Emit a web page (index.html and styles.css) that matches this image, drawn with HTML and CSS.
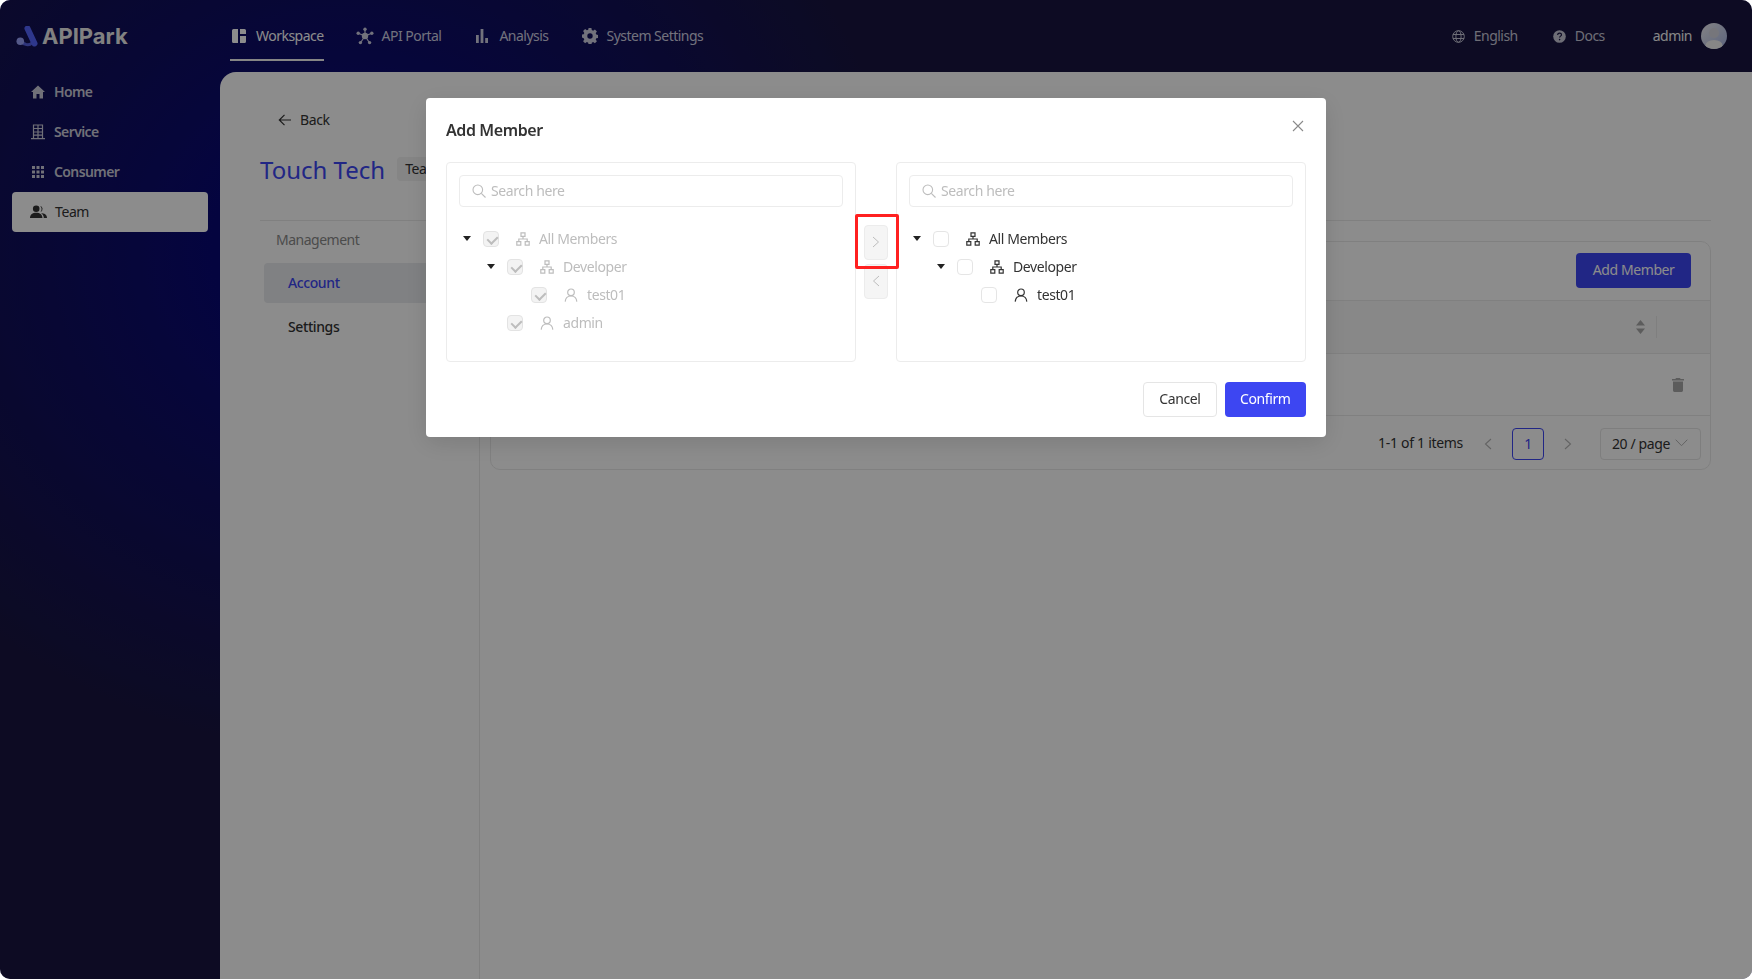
FILE: index.html
```html
<!doctype html>
<html lang="en">
<head>
  <meta charset="utf-8">
  <title>Team | APIPark</title>
  <link rel="stylesheet" href="styles.css">
</head>
<body>
  <svg class="icon-defs" width="0" height="0">
    <symbol id="i-org" viewBox="0 0 14 14">
      <path d="M5 .8h4v3.6H5zM.8 9.6h4v3.6h-4zM9.2 9.6h4v3.6h-4zM7 4.400v2.600M2.800 9.600V7h8.400v2.600" fill="none" stroke="currentColor" stroke-width="1.200"/>
    </symbol>
    <symbol id="i-user" viewBox="0 0 14 14">
      <circle cx="7" cy="4.300" r="3.300" fill="none" stroke="currentColor" stroke-width="1.200"/>
      <path d="M1.200 13.600c.3-3.400 2.600-5.600 5.800-5.600s5.500 2.200 5.800 5.600" fill="none" stroke="currentColor" stroke-width="1.200"/>
    </symbol>
    <symbol id="i-search" viewBox="0 0 14 14">
      <circle cx="5.800" cy="5.800" r="4.800" fill="none" stroke="currentColor" stroke-width="1.100"/>
      <path d="M9.300 9.300l4.200 4.200" fill="none" stroke="currentColor" stroke-width="1.100"/>
    </symbol>
  </svg>

  <div class="app">
    <header class="topbar">
      <div class="logo">
        <svg class="logo-mark" width="23" height="21" viewBox="0 0 23 21">
          <path d="M5 15c3 4 8 5 11 2" fill="none" stroke="#5560e0" stroke-width="3"/>
          <path d="M11.500 2.500L18.500 17.500" fill="none" stroke="#5565ff" stroke-width="6" stroke-linecap="round"/>
          <circle cx="4.300" cy="15.300" r="3.800" fill="#9aa3fa"/>
        </svg>
        <span class="logo-text">APIPark</span>
      </div>
      <nav class="nav">
        <a class="nav-item active">
          <span class="nav-icon">
            <svg width="14" height="14" viewBox="0 0 14 14"><path d="M0 1.500A1.500 1.500 0 0 1 1.500 0H6v14H1.500A1.500 1.500 0 0 1 0 12.500zM8 0h4.500A1.500 1.500 0 0 1 14 1.500V5H8zM8 7h6v5.500a1.500 1.500 0 0 1-1.500 1.500H8z" fill="currentColor"/></svg>
          </span>
          <span class="label">Workspace</span>
        </a>
        <a class="nav-item">
          <span class="nav-icon">
            <svg width="18" height="18" viewBox="0 0 18 18"><g fill="currentColor"><circle cx="9" cy="9" r="3.200"/><circle cx="9" cy="2.200" r="1.700"/><circle cx="2.200" cy="6.200" r="1.700"/><circle cx="15.800" cy="6.200" r="1.700"/><circle cx="4.400" cy="15.600" r="1.700"/><circle cx="13.600" cy="15.600" r="1.700"/></g><path d="M9 3v6M3 6.500L9 9l6-2.500M5 15l4-6 4 6" fill="none" stroke="currentColor" stroke-width="1.200"/></svg>
          </span>
          <span class="label">API Portal</span>
        </a>
        <a class="nav-item">
          <span class="nav-icon">
            <svg width="12" height="14" viewBox="0 0 12 14"><path d="M0 6h2.800v8H0zM4.600 0h2.800v14H4.600zM9.200 9H12v5H9.200z" fill="currentColor"/></svg>
          </span>
          <span class="label">Analysis</span>
        </a>
        <a class="nav-item">
          <span class="nav-icon">
            <svg width="16" height="16" viewBox="0 0 16 16"><path fill-rule="evenodd" d="M6.600 0h2.800l.4 2.100 1.300.6 1.800-1.200 2 2-1.200 1.800.6 1.300 2.100.4v2.800l-2.100.4-.6 1.300 1.200 1.800-2 2-1.800-1.200-1.300.6-.4 2.100H6.600l-.4-2.100-1.300-.6-1.800 1.200-2-2 1.200-1.800-.6-1.300L-.4 9.400V6.600l2.100-.4.600-1.300-1.200-1.800 2-2 1.800 1.200 1.300-.6zM8 5.300a2.700 2.700 0 1 0 0 5.400 2.700 2.700 0 0 0 0-5.400z" fill="currentColor"/></svg>
          </span>
          <span class="label">System Settings</span>
        </a>
      </nav>
      <div class="top-right">
        <a class="top-link">
          <svg width="13" height="13" viewBox="0 0 13 13"><g fill="none" stroke="currentColor" stroke-width="1"><circle cx="6.500" cy="6.500" r="5.800"/><ellipse cx="6.500" cy="6.500" rx="2.600" ry="5.800"/><path d="M1 4.500h11M1 8.500h11"/></g></svg>
          <span class="label">English</span>
        </a>
        <a class="top-link">
          <svg width="13" height="13" viewBox="0 0 13 13"><circle cx="6.500" cy="6.500" r="6.300" fill="currentColor"/><path d="M4.600 5c.1-1.200.9-1.800 2-1.800s1.900.7 1.900 1.600c0 1.300-1.900 1.400-1.900 2.800" fill="none" stroke="#181541" stroke-width="1.200"/><circle cx="6.600" cy="9.600" r=".8" fill="#181541"/></svg>
          <span class="label">Docs</span>
        </a>
        <span class="user-name label">admin</span>
        <svg class="avatar" width="26" height="26" viewBox="0 0 26 26">
          <defs>
            <linearGradient id="avatar-grad" x1="0" y1="0" x2="1" y2="1">
              <stop offset="0" stop-color="#f0eef0"/>
              <stop offset="1" stop-color="#a9b8e8"/>
            </linearGradient>
            <clipPath id="avatar-clip"><circle cx="13" cy="13" r="13"/></clipPath>
          </defs>
          <circle cx="13" cy="13" r="13" fill="url(#avatar-grad)"/>
          <g clip-path="url(#avatar-clip)">
            <circle cx="13" cy="10" r="5" fill="#d8d8e0"/>
            <ellipse cx="13" cy="22.500" rx="8.500" ry="5.500" fill="#f4f4f4"/>
          </g>
        </svg>
      </div>
    </header>

    <aside class="sidebar">
      <a class="side-item">
        <svg width="16" height="16" viewBox="0 0 16 16"><path d="M8 1.500L1 8h2v6.500h3.500V10h3v4.500H13V8h2z" fill="currentColor"/></svg>
        <span class="label">Home</span>
      </a>
      <a class="side-item">
        <svg width="16" height="16" viewBox="0 0 16 16"><path d="M3.500 1h9v13.500h-9zM3.500 4.500h9M3.500 8h9M3.500 11.200h9M8 1v13.500M1 14.700h14" fill="none" stroke="currentColor" stroke-width="1.200"/></svg>
        <span class="label">Service</span>
      </a>
      <a class="side-item">
        <svg width="16" height="16" viewBox="0 0 16 16"><path d="M2 2h3v3H2zM6.500 2h3v3h-3zM11 2h3v3h-3zM2 6.500h3v3H2zM6.500 6.500h3v3h-3zM11 6.500h3v3h-3zM2 11h3v3H2zM6.500 11h3v3h-3zM11 11h3v3h-3z" fill="currentColor"/></svg>
        <span class="label">Consumer</span>
      </a>
      <a class="side-item active">
        <svg width="17" height="16" viewBox="0 0 17 16"><g fill="currentColor"><circle cx="6.200" cy="4.800" r="3.300"/><path d="M0 14c0-3.500 2.600-5.200 6.200-5.200s6.200 1.700 6.200 5.200z"/><path d="M9.800 1.700a3.200 3.200 0 0 1 .6 6.200 4 4 0 0 0-.6-6.200zM11 9c3.300.2 6 1.600 6 5h-3.200c0-2-1-3.800-2.800-5z"/></g></svg>
        <span class="label">Team</span>
      </a>
    </aside>

    <main class="main">
      <a class="back">
        <svg width="14" height="14" viewBox="0 0 14 14"><path d="M13 7H1.500M6.500 1.800L1.300 7l5.200 5.200" fill="none" stroke="currentColor" stroke-width="1.200"/></svg>
        <span class="label">Back</span>
      </a>
      <div class="team-head">
        <h1 class="team-name">Touch Tech</h1>
        <span class="team-tag">Team ID: touch-tech</span>
      </div>
      <div class="team-body">
        <div class="sub-nav">
          <div class="sub-title">Management</div>
          <a class="sub-item active">Account</a>
          <a class="sub-item">Settings</a>
        </div>
        <div class="content">
          <section class="card">
            <div class="card-tools">
              <button class="btn btn-primary">Add Member</button>
            </div>
            <div class="table-head">
              <svg class="sort" width="9" height="14" viewBox="0 0 9 14"><path d="M4.500 0L9 5.500H0zM4.500 14L0 8.500h9z" fill="currentColor"/></svg>
              <span class="col-line"></span>
            </div>
            <div class="table-row">
              <svg class="trash" width="12" height="14" viewBox="0 0 12 14"><path d="M4 0h4l.6 1H12v1.600H0V1h3.400zM1 3.600h10V12.600A1.400 1.400 0 0 1 9.600 14H2.400A1.400 1.400 0 0 1 1 12.600z" fill="currentColor"/></svg>
            </div>
            <div class="pager">
              <span class="pager-total">1-1 of 1 items</span>
              <svg class="pager-arrow" width="8" height="12" viewBox="0 0 8 12"><path d="M7 1L1.500 6 7 11" fill="none" stroke="currentColor" stroke-width="1.100"/></svg>
              <span class="pager-num">1</span>
              <svg class="pager-arrow" width="8" height="12" viewBox="0 0 8 12"><path d="M1 1l5.500 5L1 11" fill="none" stroke="currentColor" stroke-width="1.100"/></svg>
              <span class="pager-size">20 / page
                <svg width="13" height="8" viewBox="0 0 13 8"><path d="M.7.700l5.800 6 5.800-6" fill="none" stroke="currentColor" stroke-width="1"/></svg>
              </span>
            </div>
          </section>
        </div>
      </div>
    </main>
  </div>

  <div class="mask">
    <div class="modal">
      <div class="modal-head">
        <h2 class="modal-title">Add Member</h2>
        <svg class="modal-close" width="12" height="12" viewBox="0 0 12 12"><path d="M1 1l10 10M11 1L1 11" fill="none" stroke="currentColor" stroke-width="1.100"/></svg>
      </div>
      <div class="transfer">
        <div class="transfer-panel">
          <div class="search">
            <svg width="14" height="14"><use href="#i-search"/></svg>
            <span class="label">Search here</span>
          </div>
          <ul class="tree disabled">
            <li class="tree-row">
              <span class="caret"></span><span class="check on"></span>
              <svg class="tree-icon" width="14" height="14"><use href="#i-org"/></svg><span class="label">All Members</span>
            </li>
            <li class="tree-row level-1">
              <span class="caret"></span><span class="check on"></span>
              <svg class="tree-icon" width="14" height="14"><use href="#i-org"/></svg><span class="label">Developer</span>
            </li>
            <li class="tree-row level-2">
              <span class="caret none"></span><span class="check on"></span>
              <svg class="tree-icon" width="14" height="14"><use href="#i-user"/></svg><span class="label">test01</span>
            </li>
            <li class="tree-row level-1">
              <span class="caret none"></span><span class="check on"></span>
              <svg class="tree-icon" width="14" height="14"><use href="#i-user"/></svg><span class="label">admin</span>
            </li>
          </ul>
        </div>
        <div class="transfer-ops">
          <span class="op-btn">
            <svg width="8" height="12" viewBox="0 0 8 12"><path d="M1 1l5.500 5L1 11" fill="none" stroke="currentColor" stroke-width="1"/></svg>
          </span>
          <span class="op-btn">
            <svg width="8" height="12" viewBox="0 0 8 12"><path d="M7 1L1.500 6 7 11" fill="none" stroke="currentColor" stroke-width="1"/></svg>
          </span>
          <span class="red-mark"></span>
        </div>
        <div class="transfer-panel">
          <div class="search">
            <svg width="14" height="14"><use href="#i-search"/></svg>
            <span class="label">Search here</span>
          </div>
          <ul class="tree">
            <li class="tree-row">
              <span class="caret"></span><span class="check"></span>
              <svg class="tree-icon" width="14" height="14"><use href="#i-org"/></svg><span class="label">All Members</span>
            </li>
            <li class="tree-row level-1">
              <span class="caret"></span><span class="check"></span>
              <svg class="tree-icon" width="14" height="14"><use href="#i-org"/></svg><span class="label">Developer</span>
            </li>
            <li class="tree-row level-2">
              <span class="caret none"></span><span class="check"></span>
              <svg class="tree-icon" width="14" height="14"><use href="#i-user"/></svg><span class="label">test01</span>
            </li>
          </ul>
        </div>
      </div>
      <div class="modal-foot">
        <button class="btn btn-default">Cancel</button>
        <button class="btn btn-primary">Confirm</button>
      </div>
    </div>
  </div>
</body>
</html>
```

FILE: styles.css
```css
* {
  box-sizing: border-box;
}
html, body {
  height: 100%;
}
body {
  margin: 0;
  background: #fff;
  color: #333;
  font-family: 'Noto Sans', 'Open Sans', sans-serif;
  font-size: 14px;
  letter-spacing: -0.4px;
  overflow: hidden;
}
a {
  color: inherit;
}
.icon-defs {
  display: none;
}
/* text sits a pixel higher than the icons beside it */
.label {
  margin-bottom: 2px;
}

/* page frame */
.app {
  display: grid;
  grid-template-columns: 220px 1fr;
  grid-template-rows: 72px 1fr;
  height: 100vh;
  border-radius: 10px;
  overflow: hidden;
  background: radial-gradient(ellipse 550px 500px at 350px 250px, #090974 0%, #090974 25%, #181541 100%);
}

/* top bar */
.topbar {
  grid-column: 1 / 3;
  display: flex;
  align-items: center;
  padding-right: 25px;
  letter-spacing: -0.52px;
}
.logo {
  width: 230px;
  display: flex;
  align-items: center;
  gap: 3px;
  padding-left: 16px;
}
.logo-text {
  color: #ececec;
  font-family: 'Inter', sans-serif;
  font-size: 22px;
  font-weight: 700;
  letter-spacing: 0;
}
.nav {
  display: flex;
  gap: 32px;
  height: 100%;
}
.nav-item {
  display: flex;
  align-items: center;
  gap: 8px;
  height: 100%;
  color: #cfcfe2;
  border-bottom: 2px solid transparent;
  padding-top: 2px;
}
.nav-item.active {
  color: #fff;
  height: 61px;
  padding-top: 13px;
  border-bottom-color: #f2f2f2;
}
.nav-icon {
  width: 18px;
  display: flex;
  justify-content: center;
}
.top-right {
  margin-left: auto;
  display: flex;
  align-items: center;
  color: #c8c8d8;
}
.top-link {
  display: flex;
  align-items: center;
  gap: 9px;
  margin-right: 35px;
}
.top-link + .top-link {
  margin-right: 48px;
}
.user-name {
  color: #f5f5f5;
  margin-right: 9px;
}
.avatar {
  display: block;
}

/* side menu */
.sidebar {
  padding: 0 12px;
}
.side-item {
  display: flex;
  align-items: center;
  gap: 8px;
  height: 40px;
  padding-left: 18px;
  color: #cdcdda;
  font-weight: 600;
  letter-spacing: -0.6px;
  border-radius: 4px;
}
.side-item.active {
  background: #fff;
  color: #333;
  font-weight: 400;
  letter-spacing: -0.4px;
}

/* main area */
.main {
  background: #fff;
  border-top-left-radius: 16px;
  padding: 36px 41px 0 40px;
  display: flex;
  flex-direction: column;
  min-height: 0;
}
.back {
  display: flex;
  align-items: center;
  gap: 8px;
  height: 24px;
  padding-left: 18px;
}
.team-head {
  display: flex;
  align-items: center;
  gap: 12px;
  height: 50px;
  margin-top: 12px;
}
.team-name {
  margin: 0;
  color: #3d46f2;
  font-size: 24px;
  font-weight: 400;
  letter-spacing: 0;
}
.team-tag {
  background: #f2f2f2;
  border-radius: 4px;
  padding: 2px 8px;
  line-height: 20px;
  white-space: nowrap;
}
.team-body {
  display: flex;
  flex: 1;
  margin-top: 26px;
  border-top: 1px solid #eaeaea;
}
.sub-nav {
  width: 220px;
  border-right: 1px solid #eaeaea;
  padding: 0 8px 0 4px;
}
.sub-title {
  height: 42px;
  line-height: 38px;
  padding-left: 12px;
  color: #8a8a8a;
  letter-spacing: -0.5px;
}
.sub-item {
  display: block;
  height: 40px;
  line-height: 39px;
  padding-left: 24px;
  font-weight: 500;
  border-radius: 4px;
  margin-bottom: 4px;
}
.sub-item.active {
  background: #e9ebee;
  color: #3d46f2;
}
.content {
  flex: 1;
  padding: 20px 0 0 10px;
}
.card {
  border: 1px solid #eaeaea;
  border-radius: 10px;
}
.card-tools {
  display: flex;
  justify-content: flex-end;
  align-items: center;
  height: 58px;
  padding: 0 19px 2px 0;
}
.card-tools .btn {
  padding: 0 15.500px 2px;
}
.table-head {
  display: flex;
  align-items: center;
  height: 54px;
  padding-right: 53px;
  justify-content: flex-end;
  gap: 11px;
  background: #f7f7f7;
  border-top: 1px solid #eaeaea;
  border-bottom: 1px solid #eaeaea;
}
.sort {
  color: #a8a8a8;
}
.col-line {
  width: 1px;
  height: 22px;
  background: #e8e8e8;
}
.table-row {
  display: flex;
  align-items: center;
  justify-content: flex-end;
  height: 62px;
  padding-right: 26px;
  color: #a8a8a8;
  border-bottom: 1px solid #eaeaea;
}
.pager {
  display: flex;
  align-items: center;
  justify-content: flex-end;
  height: 53px;
  padding: 3px 9px 0 0;
}
.pager-total {
  margin: 0 21px 4px 0;
  letter-spacing: -0.3px;
}
.pager-arrow {
  color: #b5b5b5;
}
.pager-num {
  width: 32px;
  height: 32px;
  line-height: 30px;
  text-align: center;
  margin: 0 20px;
  color: #3d46f2;
  border: 1px solid #3d46f2;
  border-radius: 4px;
}
.pager-size {
  display: flex;
  align-items: center;
  gap: 5px;
  height: 32px;
  width: 101px;
  margin-left: 28px;
  padding: 0 0 2px 11px;
  border: 1px solid #e5e5e5;
  border-radius: 4px;
  white-space: nowrap;
}
.pager-size svg {
  color: #b5b5b5;
}

/* buttons */
.btn {
  height: 35px;
  padding: 0 14.500px 2px;
  font: inherit;
  letter-spacing: inherit;
  border-radius: 4px;
  border: 1px solid transparent;
  cursor: pointer;
}
.btn-primary {
  background: #3d46f2;
  color: #fff;
}
.btn-default {
  background: #fff;
  border-color: #e5e5e5;
  color: #333;
  padding: 0 15px 2px;
}

/* modal */
.mask {
  position: fixed;
  top: 0;
  left: 0;
  width: 100%;
  height: 100%;
  border-radius: 10px;
  background: rgba(0,0,0,0.45);
  display: flex;
  justify-content: center;
  align-items: flex-start;
  padding-top: 98px;
}
.modal {
  width: 900px;
  height: 339px;
  padding: 20px;
  background: #fff;
  border-radius: 4px;
  box-shadow: 0 6px 24px rgba(0,0,0,0.12);
}
.modal-head {
  display: flex;
  justify-content: space-between;
  height: 44px;
}
.modal-title {
  margin: 0;
  font-size: 16px;
  line-height: 24px;
  font-weight: 600;
}
.modal-close {
  color: #8a8a8a;
  margin: 2px 2px 0 0;
}
.transfer {
  display: flex;
  height: 200px;
}
.transfer-panel {
  flex: 1;
  padding: 12px;
  border: 1px solid #ececec;
  border-radius: 4px;
}
.search {
  display: flex;
  align-items: center;
  gap: 5px;
  height: 32px;
  padding-left: 12px;
  color: #bdbdbd;
  border: 1px solid #ececec;
  border-radius: 4px;
}
.tree {
  list-style: none;
  margin: 18px 0 0;
  padding: 0;
}
.tree-row {
  display: flex;
  align-items: center;
  height: 28px;
  color: #333;
}
.tree-row.level-1 {
  padding-left: 24px;
}
.tree-row.level-2 {
  padding-left: 48px;
}
.tree.disabled .tree-row {
  color: #bdbdbd;
}
.caret {
  width: 24px;
  height: 4px;
  position: relative;
}
.caret::before {
  content: '';
  position: absolute;
  left: 4px;
  top: -1px;
  border-left: 4px solid transparent;
  border-right: 4px solid transparent;
  border-top: 5px solid #222;
}
.caret.none::before {
  display: none;
}
.check {
  width: 16px;
  height: 16px;
  margin-right: 17px;
  border: 1px solid #e5e5e5;
  border-radius: 4px;
  background: #fff;
  position: relative;
}
.check.on {
  background: #f3f3f3;
  border-color: #e3e3e3;
}
.check.on::after {
  content: '';
  position: absolute;
  left: 4.500px;
  top: 2px;
  width: 5px;
  height: 8px;
  border-right: 2px solid #bdbdbd;
  border-bottom: 2px solid #bdbdbd;
  transform: rotate(45deg);
}
.tree-icon {
  margin-right: 9px;
}
.transfer-ops {
  width: 40px;
  display: flex;
  flex-direction: column;
  align-items: center;
  justify-content: center;
  gap: 4px;
  padding-bottom: 1px;
  position: relative;
}
.op-btn {
  display: flex;
  align-items: center;
  justify-content: center;
  width: 24px;
  height: 35px;
  color: #bdbdbd;
  background: #f5f5f5;
  border: 1px solid #ececec;
  border-radius: 4px;
}
.red-mark {
  position: absolute;
  left: -1px;
  top: 52px;
  width: 44px;
  height: 55px;
  border: 3px solid #ff2020;
  border-radius: 2px;
}
.modal-foot {
  display: flex;
  justify-content: flex-end;
  gap: 8px;
  margin-top: 20px;
}
```
